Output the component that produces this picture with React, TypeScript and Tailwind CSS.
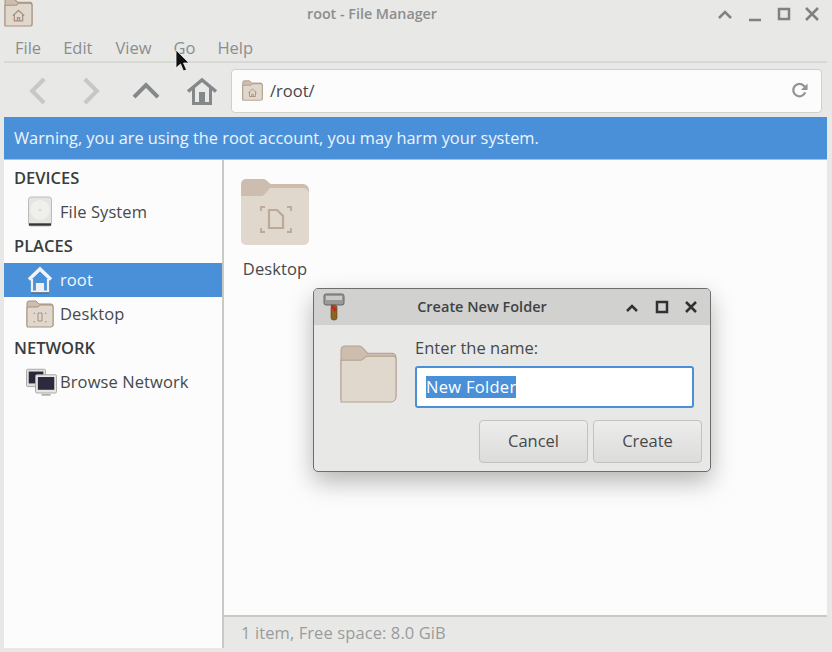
import React from "react";

const font = "font-['Open_Sans','Noto_Sans',sans-serif]";

function Folder({ className }: { className?: string }) {
  const line = "#b5a08e";
  return (
    <svg viewBox="0 0 56 57" className={className}>
      <path d="M1 54V5a4 4 0 0 1 4-4h14a4 4 0 0 1 3 1.500l5 5.500h24a4 4 0 0 1 4 4v38a2 2 0 0 1-2 2H1z" fill="#cdbdae" stroke={line} />
      <path d="M1 56V15h19a4 4 0 0 0 3-1.500L26 11h26a3 3 0 0 1 3 3v37a5 5 0 0 1-5 5H1z" fill="#e0d7cd" stroke={line} />
    </svg>
  );
}

function SmallFolder({ className, mark }: { className?: string; mark: "home" | "desktop" }) {
  return (
    <svg viewBox="0 0 28 28" className={className}>
      <path d="M1 26V3a2 2 0 0 1 2-2h7l3 3h12a2 2 0 0 1 2 2v20z" fill="#cdbdae" stroke="#a8917d" />
      <path d="M1 27V7h11l2-2h11a2 2 0 0 1 2 2v18a2 2 0 0 1-2 2z" fill="#e0d7cd" stroke="#a8917d" />
      {mark === "home" ? (
        <path d="M8.500 17l5.500-5 5.500 5M10 16v6h8v-6M13 22v-3h2v3" fill="none" stroke="#a8917d" strokeWidth="1.200" />
      ) : (
        <path d="M8 14v-1h1M19 13h1v1M8 21v1h1M19 22h1v-1M12 13h4v8h-4z" fill="none" stroke="#a8917d" />
      )}
    </svg>
  );
}

function Chevron({ d, color, className }: { d: string; color: string; className?: string }) {
  return (
    <svg viewBox="0 0 24 24" className={className}>
      <path d={d} fill="none" stroke={color} strokeWidth="3.500" strokeLinecap="square" strokeLinejoin="miter" />
    </svg>
  );
}

function SideHeader({ label }: { label: string }) {
  return <div className="h-[34px] flex items-center pl-[10px] text-[16.500px] font-semibold text-[#3a3d3e]">{label}</div>;
}

function SideRow({ label, icon, active }: { label: string; icon: React.ReactNode; active?: boolean }) {
  return (
    <div className={`h-[34px] flex items-center text-[16.500px] tracking-[0.1px] ${active ? "bg-[#4a90d9] text-[#f4f8fc]" : "text-[#46494a]"}`}>
      <div className="w-[56px] flex justify-end pr-[6px] shrink-0">{icon}</div>
      <span>{label}</span>
    </div>
  );
}

function Drive() {
  return (
    <svg viewBox="0 0 26 32" className="w-[26px] h-[32px] mr-[1px]">
      <rect x="1.500" y="1" width="23" height="29" rx="2.500" fill="#e4e4e1" stroke="#bcbcb8" />
      <circle cx="13" cy="14" r="10" fill="#efefec" />
      <circle cx="13" cy="14" r="1.500" fill="#dededb" />
      <path d="M2 28.500h22" stroke="#35353c" strokeWidth="2.400" />
    </svg>
  );
}

function HomeWhite() {
  return (
    <svg viewBox="0 0 26 28" className="w-[26px] h-[28px] mr-[1px]">
      <path d="M2 13.500L13 3l11 10.500" fill="none" stroke="#f1f2f3" strokeWidth="3.600" />
      <path d="M5 13v12.500h5V18h2v7.500h2V18h2v7.500h5V13" fill="none" stroke="#eef0f1" strokeWidth="2.200" />
      <path d="M4 27h18" stroke="#5a6a7a" strokeWidth="1.400" />
    </svg>
  );
}

function Monitors() {
  return (
    <svg viewBox="0 0 34 30" className="w-[31px] h-[29px] mr-[-3px]">
      <rect x=".5" y=".5" width="21" height="19" rx="1.500" fill="#dededb" stroke="#a3a3a0" />
      <rect x="3" y="3" width="16" height="13" fill="#29273a" />
      <rect x="10.500" y="6.500" width="23" height="20" rx="1.500" fill="#e6e6e3" stroke="#a3a3a0" />
      <rect x="13" y="9" width="18" height="14" fill="#2c2a3e" />
      <path d="M17 28.500h10" stroke="#b0b0ad" strokeWidth="2" />
    </svg>
  );
}

function Hammer() {
  return (
    <svg viewBox="0 0 22 28" className="w-[22px] h-[28px]">
      <rect x="1" y="1" width="20" height="11" rx="2" fill="#9a9a98" stroke="#666" />
      <rect x="3" y="3" width="16" height="4" fill="#c9c9c7" />
      <rect x="8" y="12" width="6" height="15" rx="2.500" fill="#8e6425" stroke="#5e4218" strokeWidth=".6" />
      <path d="M8 11l6 5-2 3-4-4z" fill="#c8281e" />
    </svg>
  );
}

export default function App() {
  return (
    <div className={`${font} relative w-[832px] h-[652px] overflow-hidden bg-[#e8e8e7] pl-[4px] pr-[5px] flex flex-col`}>
      {/* title bar */}
      <div className="h-[32px] shrink-0 flex items-center justify-center pb-[4px] pr-[87px] text-[14.300px] font-semibold text-[#8b8e8f]">
        root - File Manager
      </div>
      <div className="absolute left-[4px] top-[-2px]">
        <SmallFolder mark="home" className="w-[29px] h-[29px]" />
      </div>
      <div className="absolute top-0 left-[716px] h-[28px] flex items-center">
        <svg viewBox="0 0 110 28" className="w-[110px] h-[28px]" fill="none" stroke="#818181" strokeWidth="2.500">
          <path d="M3 18l6-6 6 6" />
          <path d="M33 20h12" />
          <rect x="63" y="9" width="10" height="10" />
          <path d="M90 8l12 12M102 8L90 20" />
        </svg>
      </div>

      {/* menu */}
      <div className="h-[31px] shrink-0 flex items-center gap-[22px] pl-[11px] pt-[3px] text-[16.500px] text-[#8b8e8f] border-b-2 border-[#d8d8d5]">
        <span>File</span>
        <span>Edit</span>
        <span className="ml-[1px]">View</span>
        <span>Go</span>
        <span>Help</span>
      </div>

      {/* toolbar */}
      <div className="h-[54px] shrink-0 flex items-center pt-[1px]">
        <Chevron d="M16 3L7 12l9 9" color="#c6c7c6" className="w-[28px] h-[28px] ml-[20px] shrink-0" />
        <Chevron d="M8 3l9 9-9 9" color="#c6c7c6" className="w-[28px] h-[28px] ml-[25px] shrink-0" />
        <Chevron d="M3 16l9-9 9 9" color="#84888a" className="w-[28px] h-[28px] ml-[27px] shrink-0" />
        <svg viewBox="0 0 32 28" className="w-[32px] h-[28px] ml-[26px] shrink-0" fill="none" stroke="#84888a">
          <path d="M2 14.500L16 3l14 11.500" strokeWidth="3.500" />
          <path d="M7.500 11v15.500h17V11" strokeWidth="3" />
          <rect x="13" y="15" width="6" height="11" fill="#84888a" stroke="none" />
        </svg>
        <div className="ml-[13px] w-[591px] h-[44px] bg-[#fcfcfc] border border-[#cfcfcc] rounded-[4px] flex items-center pl-[10px] pr-[12px] text-[16.500px] text-[#44474a]">
          <SmallFolder mark="home" className="w-[21px] h-[21px] shrink-0" />
          <span className="ml-[7px] pt-[1px]">/root/</span>
          <svg viewBox="0 0 20 20" className="ml-auto w-[19px] h-[19px]" fill="none" stroke="#939393" strokeWidth="2.400">
            <path d="M16 12a6.500 6.500 0 1 1-1-6.500l2 2" />
            <path d="M18.500 2.500v7h-7z" fill="#939393" stroke="none" />
          </svg>
        </div>
      </div>

      {/* root warning */}
      <div className="h-[43px] shrink-0 bg-[#4a90d9] text-[#eef4fb] text-[16.350px] flex items-center pl-[10px] pt-[1px] border-b border-[#bdbdb9]">
        Warning, you are using the root account, you may harm your system.
      </div>

      {/* panes */}
      <div className="flex-1 flex min-h-0 mb-[4px]">
        <div className="w-[218px] shrink-0 bg-[#fcfcfc] pt-[1px]">
          <SideHeader label="DEVICES" />
          <SideRow label="File System" icon={<Drive />} />
          <SideHeader label="PLACES" />
          <SideRow label="root" active icon={<HomeWhite />} />
          <SideRow label="Desktop" icon={<SmallFolder mark="desktop" className="w-[28px] h-[28px]" />} />
          <SideHeader label="NETWORK" />
          <SideRow label="Browse Network" icon={<Monitors />} />
        </div>
        <div className="w-[2px] bg-[#c9c9c6] shrink-0" />
        <div className="flex-1 flex flex-col min-w-0">
          <div className="flex-1 bg-[#fcfcfc] pt-[18px] pl-[17px]">
            <div className="w-[68px] flex flex-col items-center">
              <svg viewBox="0 0 68 68" className="w-[68px] h-[68px]">
                <path d="M0 50V6a5 5 0 0 1 5-5h17a4 4 0 0 1 3 1l4.500 4H62a6 6 0 0 1 6 6v38z" fill="#cdbdae" />
                <path d="M0 18h20a4 4 0 0 0 3-1l6-7h33a6 6 0 0 1 6 6v46a5 5 0 0 1-5 5H5a5 5 0 0 1-5-5z" fill="#e0d7cd" />
                <path d="M20 33v-4h4M46 29h4v4M20 50v4h4M46 54h4v-4" fill="none" stroke="#bda999" strokeWidth="1.800" />
                <path d="M28 32h8l6 6v12H28z" fill="none" stroke="#bda999" strokeWidth="2.200" />
              </svg>
              <span className="mt-[11px] text-[16.500px] tracking-[0.1px] text-[#46494a] whitespace-nowrap">Desktop</span>
            </div>
          </div>
          <div className="h-[33px] shrink-0 border-t-2 border-[#c9c9c6] flex items-center pl-[17px] pt-[1px] text-[16.500px] tracking-[0.1px] text-[#9a9c9c]">
            1 item, Free space: 8.0 GiB
          </div>
        </div>
      </div>

      {/* dialog */}
      <div className="absolute left-[313px] top-[288px] w-[398px] h-[184px] rounded-[5px] border border-[#6e6e6c] bg-[#e8e8e7] shadow-[0_10px_24px_rgba(0,0,0,0.28)] overflow-hidden flex flex-col">
        <div className="relative h-[36px] shrink-0 bg-[#d1d1cf] flex items-center justify-center pr-[60px] text-[14.500px] font-semibold text-[#3f4344]">
          <div className="absolute left-[9px] top-[4px]"><Hammer /></div>
          Create New Folder
          <svg viewBox="0 0 80 28" className="absolute left-[308px] top-[4px] w-[80px] h-[28px]" fill="none" stroke="#2f3233" strokeWidth="2.500">
            <path d="M5 18l5-5 5 5" />
            <rect x="35" y="9" width="10" height="10" />
            <path d="M64 9l10 10M74 9L64 19" />
          </svg>
        </div>
        <div className="flex-1 flex pl-[26px] pt-[20px] pr-[8px]">
          <Folder className="w-[57px] h-[58px] shrink-0" />
          <div className="ml-[18px] flex-1 min-w-0 mt-[-9px]">
            <div className="text-[16.500px] text-[#46494a] leading-[24px]">Enter the name:</div>
            <div className="mt-[6px] w-[279px] h-[42px] bg-white border-2 border-[#4a90d9] rounded-[3px] flex items-center pl-[9px] text-[16.500px] tracking-[0.3px]">
              <span className="bg-[#4a90d9] text-white h-[22px] leading-[22px]">New Folder</span>
            </div>
            <div className="mt-[12px] flex justify-end gap-[5px]">
              <div className="w-[109px] h-[43px] rounded-[4px] border border-[#c2c2bf] bg-gradient-to-b from-[#ecedec] to-[#dcdcda] flex items-center justify-center text-[16.500px] text-[#46494a]">Cancel</div>
              <div className="w-[109px] h-[43px] rounded-[4px] border border-[#c2c2bf] bg-gradient-to-b from-[#ecedec] to-[#dcdcda] flex items-center justify-center text-[16.500px] text-[#46494a]">Create</div>
            </div>
          </div>
        </div>
      </div>

      {/* mouse pointer */}
      <svg viewBox="0 0 16 24" className="absolute left-[175px] top-[49px] w-[16px] h-[24px]">
        <path d="M1 1v18l4.500-4 3 7 3-1.300-3-6.700H14z" fill="#111" stroke="#f2f2f2" strokeWidth="0.800" />
      </svg>
    </div>
  );
}
